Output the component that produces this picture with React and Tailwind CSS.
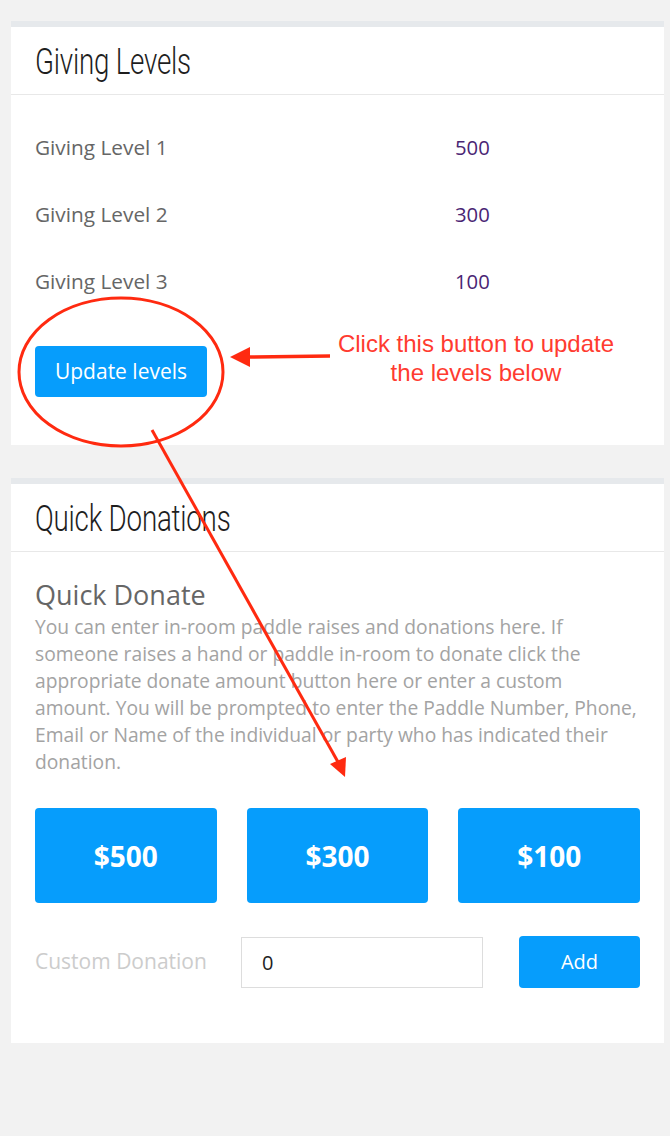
import React from "react";

function Heading({ children }) {
  return (
    <h2 className="inline-block origin-left scale-x-[0.75] text-[37px] leading-none font-light text-[#1e1e1e] tracking-[-0.3px] font-['Roboto',sans-serif] whitespace-nowrap">
      {children}
    </h2>
  );
}

export default function App() {
  return (
    <div className="relative w-[670px] h-[1136px] bg-[#f2f2f2] overflow-hidden font-['Open_Sans',sans-serif]">
      <div className="flex flex-col pt-[21px] pl-[11px] pr-[6px] gap-[33px]">
        {/* Giving Levels card */}
        <div className="bg-white border-t-[6px] border-[#e6e9ec]">
          <div className="h-[68px] border-b border-[#e8e8e8] flex items-center px-[24px] pt-[2px]">
            <Heading>Giving Levels</Heading>
          </div>
          <div className="px-[24px] pt-[19px]">
            {[["Giving Level 1", "500"], ["Giving Level 2", "300"], ["Giving Level 3", "100"]].map(([l, v]) => (
              <div key={l} className="flex items-center h-[67px]">
                <span className="w-[420px] text-[20.8px] text-[#666]">{l}</span>
                <span className="text-[20.3px] text-[#4a2574]">{v}</span>
              </div>
            ))}
            <div className="pt-[31px] pb-[48px]">
              <button className="w-[172px] h-[51px] rounded-[4px] bg-[#069dfc] text-white text-[21px]">Update levels</button>
            </div>
          </div>
        </div>

        {/* Quick Donations card */}
        <div className="bg-white border-t-[6px] border-[#e6e9ec] h-[565px]">
          <div className="h-[68px] border-b border-[#e8e8e8] flex items-center px-[24px] pt-[2px]">
            <Heading>Quick Donations</Heading>
          </div>
          <div className="px-[24px] pt-[26px]">
            <h3 className="text-[27px] text-[#666] leading-[34px]">Quick Donate</h3>
            <p className="w-[602px] text-[19.25px] leading-[27px] text-[#a3a3a3] mt-[1px]">
              You can enter in-room paddle raises and donations here. If someone raises a hand or paddle in-room to donate click the appropriate donate amount button here or enter a custom amount. You will be prompted to enter the Paddle Number, Phone, Email or Name of the individual or party who has indicated their donation.
            </p>
            <div className="grid grid-cols-3 gap-[30px] mt-[33px]">
              {["$500", "$300", "$100"].map((a) => (
                <button key={a} className="h-[95px] rounded-[4px] bg-[#069dfc] text-white text-[28px] font-bold">{a}</button>
              ))}
            </div>
            <div className="flex items-center mt-[33px]">
              <span className="w-[206px] text-[21px] text-[#cccccc]">Custom Donation</span>
              <input readOnly value="0" className="w-[242px] h-[51px] border border-[#dddddd] px-[20px] text-[20px] text-[#222] outline-none" />
              <button className="ml-auto w-[121px] h-[52px] rounded-[4px] bg-[#069dfc] text-white text-[20px]">Add</button>
            </div>
          </div>
        </div>
      </div>

      {/* annotation overlay */}
      <svg className="absolute left-0 top-0 pointer-events-none" width="670" height="1136">
        <ellipse cx="121" cy="372" rx="102" ry="74" fill="none" stroke="#ff2a10" strokeWidth="3" />
        <line x1="330" y1="356" x2="248" y2="357" stroke="#ff2a10" strokeWidth="3.5" />
        <polygon points="230,357 250,347 250,367" fill="#ff2a10" />
        <line x1="152" y1="430" x2="338" y2="762" stroke="#ff2a10" strokeWidth="3" />
        <polygon points="345,777 330,764 346,757" fill="#ff2a10" />
      </svg>
      <div className="absolute left-[326px] top-[329px] w-[300px] text-center text-[24px] leading-[29px] text-[#ff3b30] font-['Liberation_Sans',sans-serif] pointer-events-none">
        Click this button to update<br />the levels below
      </div>
    </div>
  );
}
